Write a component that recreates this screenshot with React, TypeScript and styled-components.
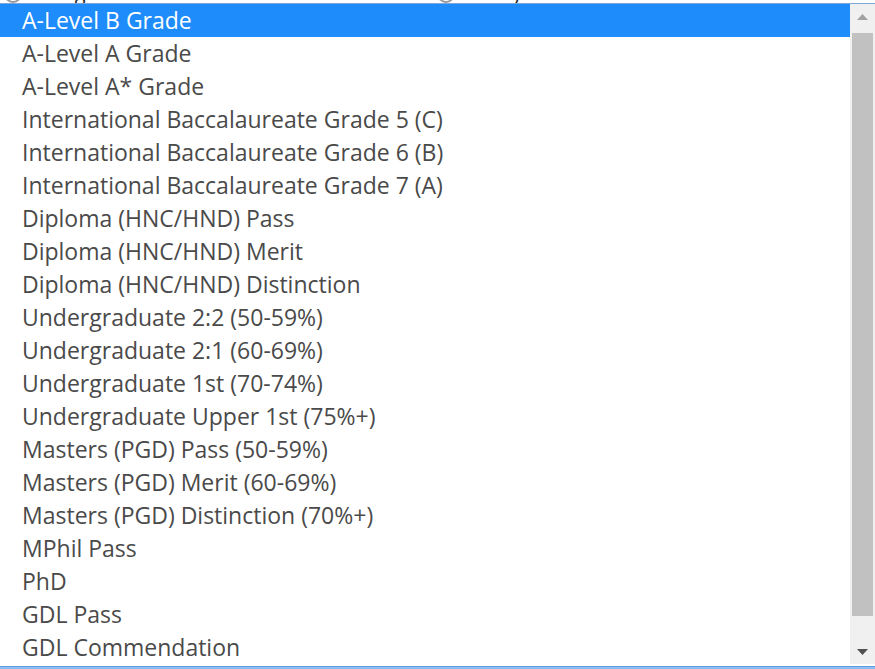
import React from 'react';
import styled, { createGlobalStyle } from 'styled-components';

const GlobalStyle = createGlobalStyle`
  html, body {
    margin: 0;
    padding: 0;
    background: #ffffff;
  }
  body {
    font-family: "Open Sans", "Liberation Sans", sans-serif;
    overflow: hidden;
  }
`;

const Page = styled.div`
  width: 875px;
  height: 669px;
  display: flex;
  flex-direction: column;
  overflow: hidden;
  background: #ffffff;
`;

// the page underneath peeks out above the open list
const BehindStrip = styled.div`
  height: 3px;
  overflow: hidden;
  display: flex;
`;

const BehindRow = styled.div`
  display: flex;
  align-items: flex-end;
  margin-top: -17px;
  height: 20px;
  font-size: 20px;
  line-height: 20px;
  color: #222;
`;

const BehindItem = styled.div<{ $left: number }>`
  display: flex;
  align-items: flex-end;
  gap: 16px;
  margin-left: ${({ $left }) => $left}px;
`;

const Radio = styled.span`
  width: 18px;
  height: 18px;
  border: 2px solid #999;
  border-radius: 50%;
  box-sizing: border-box;
`;

const ListBox = styled.div`
  display: flex;
  height: 661px;
  border-top: 1px solid #7aa7d6;
  box-sizing: border-box;
`;

const Options = styled.ul`
  flex: 1;
  margin: 0;
  padding: 0;
  list-style: none;
  overflow: hidden;
`;

const Option = styled.li<{ $selected?: boolean }>`
  height: 33px;
  line-height: 33px;
  padding-left: 22px;
  font-size: 23px;
  color: ${({ $selected }) => ($selected ? '#ffffff' : '#4a4a4a')};
  background: ${({ $selected }) => ($selected ? '#1e8cfa' : 'transparent')};
  white-space: nowrap;
`;

const Scrollbar = styled.div`
  width: 25px;
  background: #f0f0f0;
  display: flex;
  flex-direction: column;
  align-items: center;
`;

const ArrowButton = styled.div<{ $dark?: boolean }>`
  height: 25px;
  width: 100%;
  display: flex;
  align-items: center;
  justify-content: center;
  color: ${({ $dark }) => ($dark ? '#505050' : '#a3a3a3')};
`;

const Thumb = styled.div`
  width: 21px;
  margin-left: 2px;
  align-self: flex-start;
  height: 583px;
  margin-top: 4px;
  background: #c1c1c1;
`;

const Spacer = styled.div`
  flex: 1;
`;

const BottomEdge = styled.div`
  height: 3px;
  margin-top: 2px;
  background: #8cbcf0;
  border-top: 1px solid #5e9ee6;
  box-sizing: border-box;
`;

const options = [
  'A-Level B Grade',
  'A-Level A Grade',
  'A-Level A* Grade',
  'International Baccalaureate Grade 5 (C)',
  'International Baccalaureate Grade 6 (B)',
  'International Baccalaureate Grade 7 (A)',
  'Diploma (HNC/HND) Pass',
  'Diploma (HNC/HND) Merit',
  'Diploma (HNC/HND) Distinction',
  'Undergraduate 2:2 (50-59%)',
  'Undergraduate 2:1 (60-69%)',
  'Undergraduate 1st (70-74%)',
  'Undergraduate Upper 1st (75%+)',
  'Masters (PGD) Pass (50-59%)',
  'Masters (PGD) Merit (60-69%)',
  'Masters (PGD) Distinction (70%+)',
  'MPhil Pass',
  'PhD',
  'GDL Pass',
  'GDL Commendation',
];

const App: React.FC = () => {
  return (
    <>
      <GlobalStyle />
      <Page>
        <BehindStrip>
          <BehindRow>
            <BehindItem $left={4}>
              <Radio />
              <span>Assignment</span>
            </BehindItem>
            <BehindItem $left={290}>
              <Radio />
              <span>Essay Plan/Outline</span>
            </BehindItem>
          </BehindRow>
        </BehindStrip>
        <ListBox>
          <Options>
            {options.map((label, i) => (
              <Option key={label} $selected={i === 0}>
                {label}
              </Option>
            ))}
          </Options>
          <Scrollbar>
            <ArrowButton>
              <svg width="11" height="6" viewBox="0 0 11 6">
                <path d="M0 6 L5.5 0 L11 6 Z" fill="currentColor" />
              </svg>
            </ArrowButton>
            <Thumb />
            <Spacer />
            <ArrowButton $dark>
              <svg width="11" height="6" viewBox="0 0 11 6">
                <path d="M0 0 L11 0 L5.5 6 Z" fill="currentColor" />
              </svg>
            </ArrowButton>
          </Scrollbar>
        </ListBox>
        <BottomEdge />
      </Page>
    </>
  );
};

export default App;
